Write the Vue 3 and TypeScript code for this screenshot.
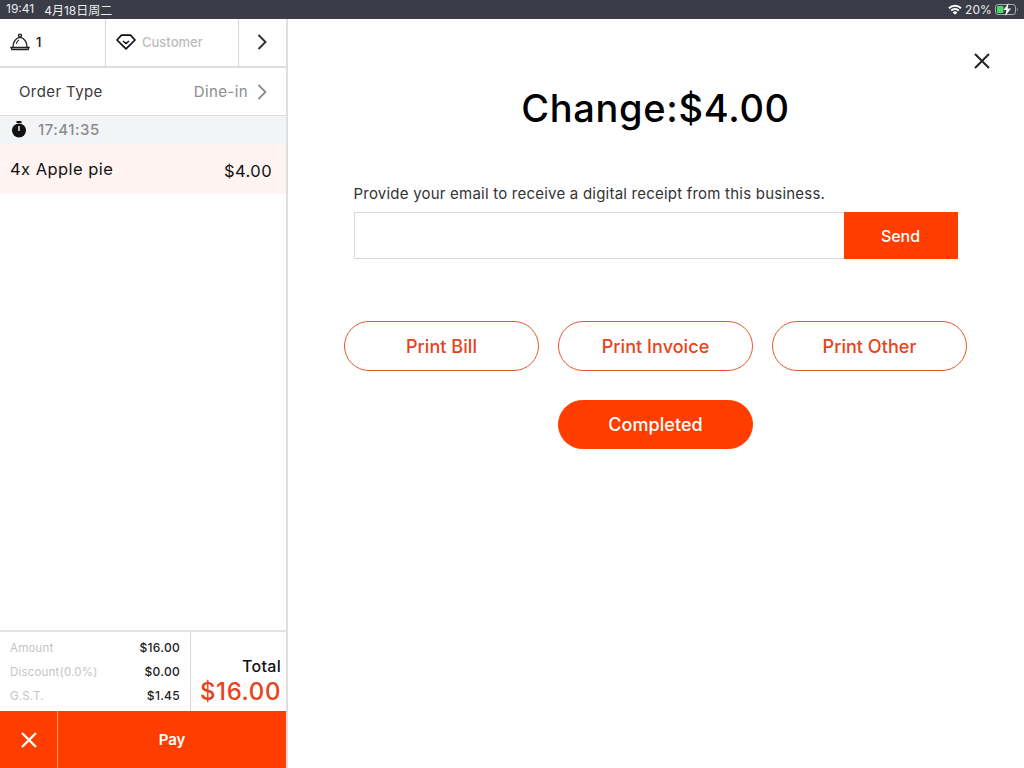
<script setup lang="ts">
const buttons: string[] = ['Print Bill', 'Print Invoice', 'Print Other']
const rows: { label: string; value: string }[] = [
  { label: 'Amount', value: '$16.00' },
  { label: 'Discount(0.0%)', value: '$0.00' },
  { label: 'G.S.T.', value: '$1.45' },
]
</script>

<template>
  <div class="page">
    <header class="status">
      <div class="status-left"><span>19:41</span><span>4月18日周二</span></div>
      <div class="status-right">
        <svg width="14" height="11" viewBox="0 0 14 11"><path d="M1 4.2 A8.5 8.5 0 0 1 13 4.2" fill="none" stroke="#fff" stroke-width="2"/><path d="M3.2 6.6 A5.4 5.4 0 0 1 10.8 6.6" fill="none" stroke="#fff" stroke-width="1.9"/><path d="M7 10.8 L4.7 8.4 A3.2 3.2 0 0 1 9.3 8.4 Z" fill="#fff"/></svg>
        <span>20%</span>
        <svg width="24" height="13" viewBox="0 0 24 13"><rect x="0.5" y="1.5" width="20" height="10" rx="2.5" fill="none" stroke="#a9aaae"/><rect x="2" y="3" width="6.5" height="7" rx="1" fill="#4cd964"/><path d="M21.8 5 C23 5.5 23 7.5 21.8 8Z" fill="#a9aaae"/><path d="M13.5 0 L8.5 7 H11.5 L10.2 13 L16 5.5 H12.7 Z" fill="#fff"/></svg>
      </div>
    </header>
    <div class="main">
      <aside class="side">
        <div class="top">
          <div class="cell table">
            <svg width="20" height="18" viewBox="0 0 20 18" fill="none" stroke="#222" stroke-width="1.4"><circle cx="10" cy="2.6" r="1.5"/><path d="M3 14 C3 9 6 4.6 10 4.4 C14 4.6 17 9 17 14"/><path d="M6.2 11 C6.6 9 7.6 7.6 9 7" stroke-width="1.1"/><path d="M1 14.5 H19 L18 16.5 H2 Z"/></svg>
            <span>1</span>
          </div>
          <div class="cell customer">
            <svg width="20" height="16" viewBox="0 0 20 16" fill="none" stroke="#111" stroke-width="1.7" stroke-linejoin="round"><path d="M5.5 1.2 H14.5 L19 6 L10 14.8 L1 6 Z"/><path d="M7 7 L10 9.6 L13 7" stroke-width="1.4"/></svg>
            <span>Customer</span>
          </div>
          <div class="cell more">
            <svg width="10" height="16" viewBox="0 0 10 16" fill="none" stroke="#333" stroke-width="2"><path d="M1.5 1 L8.5 8 L1.5 15"/></svg>
          </div>
        </div>
        <div class="order">
          <span>Order Type</span>
          <div class="order-value">
            <span>Dine-in</span>
            <svg width="10" height="16" viewBox="0 0 10 16" fill="none" stroke="#8c8c8c" stroke-width="1.8"><path d="M1.5 1 L8.5 8 L1.5 15"/></svg>
          </div>
        </div>
        <div class="time">
          <svg width="16" height="17" viewBox="0 0 16 17"><rect x="5.5" y="0" width="5" height="2" fill="#111"/><circle cx="8" cy="9.5" r="7" fill="#111"/><rect x="7.3" y="5" width="1.4" height="5" fill="#fff"/></svg>
          <span>17:41:35</span>
        </div>
        <div class="item"><span>4x Apple pie</span><span class="price">$4.00</span></div>
        <div class="spacer"></div>
        <div class="summary">
          <div class="lines">
            <div v-for="r in rows" :key="r.label" class="line">
              <span class="lbl">{{ r.label }}</span><span class="val">{{ r.value }}</span>
            </div>
          </div>
          <div class="total">
            <span class="total-l">Total</span>
            <span class="total-v">$16.00</span>
          </div>
        </div>
        <div class="actions">
          <div class="cancel">
            <svg width="18" height="18" viewBox="0 0 18 18" stroke="#fff" stroke-width="2.4"><path d="M2 2 L16 16 M16 2 L2 16"/></svg>
          </div>
          <div class="pay">Pay</div>
        </div>
      </aside>
      <section class="content">
        <div class="close-row">
          <svg width="18" height="18" viewBox="0 0 18 18" stroke="#222" stroke-width="2"><path d="M2 2 L16 16 M16 2 L2 16"/></svg>
        </div>
        <h1>Change:$4.00</h1>
        <div class="receipt">
          <p>Provide your email to receive a digital receipt from this business.</p>
          <div class="send-row">
            <div class="field"></div>
            <div class="send">Send</div>
          </div>
        </div>
        <div class="prints">
          <div v-for="b in buttons" :key="b" class="pill">{{ b }}</div>
        </div>
        <div class="pill done">Completed</div>
      </section>
    </div>
  </div>
</template>

<style>
html, body { margin: 0; background: #fff; }
</style>

<style scoped>
.page { width: 1024px; height: 768px; display: flex; flex-direction: column; overflow: hidden; font-family: Inter, "Noto Sans CJK SC", sans-serif; background: #fff; color: #111; }
.status { height: 19px; flex: none; background: #3a3c47; color: #eceded; display: flex; justify-content: space-between; align-items: center; font-size: 12px; padding: 0 5px 0 6px; }
.status-left { display: flex; gap: 10px; }
.status-right { display: flex; align-items: center; gap: 3px; font-size: 12px; letter-spacing: 0.1px; }
.main { flex: 1; display: flex; min-height: 0; }
.side { width: 286px; flex: none; border-right: 2px solid #dfdfe1; display: flex; flex-direction: column; }
.top { height: 47px; flex: none; display: flex; border-bottom: 2px solid #dedede; }
.cell { display: flex; align-items: center; border-right: 1px solid #d5d5d5; padding-bottom: 1px; box-sizing: border-box; }
.table { width: 106px; padding-left: 10px; gap: 6px; font-size: 13px; font-weight: 500; }
.customer { width: 133px; padding-left: 10px; gap: 6px; font-size: 13px; font-weight: 500; color: #bdbdbd; }
.more { flex: 1; border-right: 0; justify-content: center; padding-right: 1px; }
.order { height: 47px; flex: none; display: flex; justify-content: space-between; align-items: center; padding: 0 19px; border-bottom: 1px solid #dedede; font-size: 15px; letter-spacing: 0.4px; color: #3a3a3a; }
.order-value { display: flex; align-items: center; gap: 9px; color: #8c8c8c; }
.time { height: 28px; flex: none; box-sizing: border-box; padding-bottom: 1px; background: #f3f4f6; display: flex; align-items: center; gap: 11px; padding-left: 11px; font-size: 15px; font-weight: 500; letter-spacing: 0.5px; color: #8a8c90; }
.item { height: 50px; flex: none; background: #fff4f1; display: flex; justify-content: space-between; align-items: center; padding: 0 14px 0 10px; font-size: 16.5px; letter-spacing: 0.45px; font-weight: 400; }
.item .price { padding-top: 3px; }
.spacer { flex: 1; }
.summary { height: 81px; flex: none; display: flex; border-top: 2px solid #e3e3e3; box-sizing: border-box; }
.lines { width: 191px; flex: none; box-sizing: border-box; padding: 8px 10px 7px 10px; border-right: 1px solid #d5d5d5; display: flex; flex-direction: column; justify-content: space-between; }
.line { display: flex; justify-content: space-between; font-size: 11.5px; letter-spacing: 0.2px; line-height: 16px; }
.lbl { color: #c4c4c4; }
.val { color: #222; font-weight: 500; font-size: 12px; letter-spacing: 0.3px; }
.total { flex: 1; display: flex; flex-direction: column; align-items: flex-end; justify-content: flex-end; padding: 0 5px 3px 0; }
.total-l { font-size: 16px; font-weight: 500; line-height: 20px; letter-spacing: 0.3px; }
.total-v { font-size: 24px; font-weight: 500; line-height: 32px; color: #e8431a; letter-spacing: 0.6px; }
.actions { height: 57px; flex: none; display: flex; background: #ff3d00; color: #fff; }
.cancel { width: 57px; flex: none; display: flex; align-items: center; justify-content: center; border-right: 1px solid #ff9a7a; }
.pay { flex: 1; display: flex; align-items: center; justify-content: center; font-size: 15px; font-weight: 600; }
.content { flex: 1; display: flex; flex-direction: column; align-items: center; padding-right: 1px; }
.close-row { align-self: stretch; display: flex; justify-content: flex-end; padding: 33px 32px 0 0; height: 18px; }
h1 { margin: 16px 0 0; font-size: 38px; font-weight: 500; line-height: 44px; color: #000; letter-spacing: 0.7px; }
.receipt { width: 604px; margin-top: 55px; }
.receipt p { margin: 0 0 10px; font-size: 15px; line-height: 17px; letter-spacing: 0.22px; color: #333; }
.send-row { display: flex; height: 47px; }
.field { flex: 1; border: 1.5px solid #d9d9d9; border-right: 0; box-sizing: border-box; background: #fff; }
.send { width: 114px; background: #ff3d00; color: #fff; display: flex; align-items: center; justify-content: center; font-size: 16px; font-weight: 500; }
.prints { display: flex; gap: 19px; margin-top: 62px; }
.pill { width: 195px; height: 50px; box-sizing: border-box; border-radius: 25px; border: 1.2px solid #e4572e; color: #e8431a; display: flex; align-items: center; justify-content: center; font-size: 18px; font-weight: 500; letter-spacing: 0.05px; }
.done { margin-top: 29px; height: 49px; background: #ff3d00; color: #fff; border-color: #ff3d00; }
</style>
